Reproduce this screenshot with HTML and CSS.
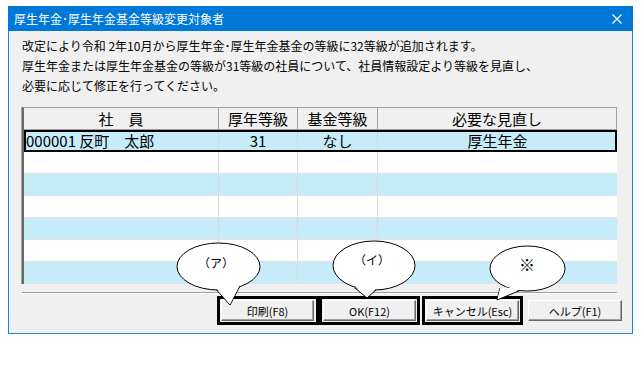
FILE: index.html
```html
<!DOCTYPE html>
<html lang="ja">
<head>
    <meta charset="UTF-8">
    <meta name="viewport" content="width=device-width, initial-scale=1.0">
    <title>厚生年金･厚生年金基金等級変更対象者</title>
    <link rel="stylesheet" href="styles.css">
</head>
<body>
  <div class="window">
    <div class="titlebar">
      <span class="title">厚生年金･厚生年金基金等級変更対象者</span>
      <svg class="close" width="10" height="10" viewBox="0 0 10 10">
        <path d="M0.5 0.5 L9.5 9.5 M9.5 0.5 L0.5 9.5" stroke="#fff" stroke-width="1.2" fill="none"/>
      </svg>
    </div>
    <div class="content">
      <p class="msg">改定により令和 2年10月から厚生年金･厚生年金基金の等級に32等級が追加されます。<br>厚生年金または厚生年金基金の等級が31等級の社員について、社員情報設定より等級を見直し、<br>必要に応じて修正を行ってください。</p>
      <div class="grid">
        <div class="row head">
          <div class="cell">社　員</div>
          <div class="cell">厚年等級</div>
          <div class="cell">基金等級</div>
          <div class="cell">必要な見直し</div>
        </div>
        <div class="row blue sel">
          <div class="cell left">000001 反町　太郎</div>
          <div class="cell">31</div>
          <div class="cell">なし</div>
          <div class="cell">厚生年金</div>
        </div>
        <div class="row"><div class="cell"></div><div class="cell"></div><div class="cell"></div><div class="cell"></div></div>
        <div class="row blue"><div class="cell"></div><div class="cell"></div><div class="cell"></div><div class="cell"></div></div>
        <div class="row"><div class="cell"></div><div class="cell"></div><div class="cell"></div><div class="cell"></div></div>
        <div class="row blue"><div class="cell"></div><div class="cell"></div><div class="cell"></div><div class="cell"></div></div>
        <div class="row"><div class="cell"></div><div class="cell"></div><div class="cell"></div><div class="cell"></div></div>
        <div class="row blue"><div class="cell"></div><div class="cell"></div><div class="cell"></div><div class="cell"></div></div>
      </div>
      <div class="sep"></div>
      <div class="buttons">
        <div class="mark first"><button class="btn">印刷(F8)</button></div>
        <div class="mark"><button class="btn">OK(F12)</button></div>
        <div class="mark gap"><button class="btn">キャンセル(Esc)</button></div>
        <button class="btn help">ヘルプ(F1)</button>
      </div>
    </div>
  </div>

  <!-- callouts over the buttons -->
  <svg class="notes" width="642" height="369" viewBox="0 0 642 369">
    <g fill="#fff" stroke="#000" stroke-width="1">
      <polygon points="214,287 230,305 241,284"/>
      <ellipse cx="218.5" cy="266.5" rx="41.5" ry="23.5"/>
      <polygon points="214.5,286 230,304 240.5,283.5" stroke="none"/>

      <polygon points="355,288 367,298 377,289"/>
      <ellipse cx="374" cy="265.5" rx="41" ry="24.5"/>
      <polygon points="355.5,287 367,297 376.5,288" stroke="none"/>

      <polygon points="500,288 497,300 521,290"/>
      <ellipse cx="527.5" cy="268.5" rx="37.5" ry="22.5"/>
      <polygon points="500.5,287 497.5,299 520.5,289" stroke="none"/>
    </g>
    <g class="note-text" fill="#000">
      <text x="216" y="268" text-anchor="middle">（ア）</text>
      <text x="372" y="265" text-anchor="middle">（イ）</text>
      <text class="big" x="527" y="271" text-anchor="middle">※</text>
    </g>
  </svg>
</body>
</html>
```

FILE: styles.css
```css
*{
    margin: 0;
    padding: 0;
    box-sizing: border-box;
    font-family: "Noto Sans CJK JP", "Noto Sans", sans-serif;
}
body{
    background-color: white;
    position: relative;
    width: 642px;
    height: 369px;
}
.window{
    width: 625px;
    margin: 6px 0 0 8px;
}
.titlebar{
    height: 25px;
    background-color: #0078d7;
    display: flex;
    align-items: center;
    justify-content: space-between;
    padding: 0 11px 0 6px;
}
.title{
    color: white;
    font-size: 12px;
    line-height: 25px;
}
.content{
    background-color: #f0f0f0;
    border: 1px solid #1883d7;
    border-top: none;
    padding: 5px 15px 8px 13px;
}
.msg{
    font-size: 12px;
    line-height: 20px;
    color: #000;
    white-space: nowrap;
    margin-bottom: 11px;
}
.grid{
    width: 595px;
    border-top: 1px solid #a0a0a0;
    border-left: 2px solid #696969;
    box-shadow: -1px 0 0 #a0a0a0;
    background-color: white;
}
.row{
    display: grid;
    grid-template-columns: 195px 79px 80px 1fr;
    height: 22px;
    border-bottom: 1px solid #e2e2e2;
}
.row .cell{
    border-right: 1px solid #d9d9d9;
    font-size: 15px;
    line-height: 21px;
    text-align: center;
    color: #000;
    white-space: nowrap;
    overflow: hidden;
}
.row .cell:last-child{
    border-right: none;
}
.head{
    background-color: #f0f0f0;
    border-bottom: 1px solid #a0a0a0;
}
.head .cell{
    border-right: 1px solid #a0a0a0;
}
.head .cell:last-child{
    border-right: 1px solid #a0a0a0;
}
.blue{
    background-color: #c6ecf9;
}
.sel{
    outline: 2px solid #000;
    outline-offset: -2px;
}
.sel .cell{
    line-height: 22px;
}
.cell.left{
    text-align: left;
    padding-left: 2px;
}
.sep{
    margin-top: 8px;
    width: 595px;
    height: 2px;
    border-top: 1px solid #a0a0a0;
    border-bottom: 1px solid #fff;
}
.buttons{
    display: flex;
    justify-content: flex-end;
    align-items: center;
    margin: 2px -5px 0 0;
}
.mark{
    border: 3px solid #000;
    padding: 1px;
    width: 101px;
    display: flex;
}
.mark.first{
    width: 102px;
}
.mark.gap{
    margin-left: 2px;
}
.btn{
    width: 93px;
    height: 21px;
    background-color: #f0f0f0;
    border: 1px solid;
    border-color: #fff #696969 #696969 #fff;
    box-shadow: inset -1px -1px 0 #a0a0a0;
    font-size: 11px;
    color: #000;
}
.help{
    width: 94px;
    margin-left: 5px;
}
.notes{
    position: absolute;
    top: 0;
    left: 0;
    pointer-events: none;
}
.note-text text{
    font-size: 12px;
}
.note-text text.big{
    font-size: 16px;
}
```
